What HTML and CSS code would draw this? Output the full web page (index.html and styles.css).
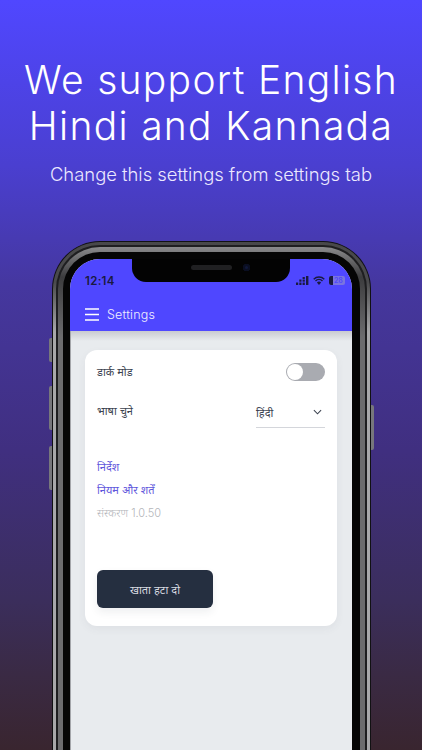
FILE: index.html
```html
<!DOCTYPE html>
<html lang="hi">
<head>
<meta charset="utf-8">
<title>Settings</title>
<link rel="stylesheet" href="styles.css">
</head>
<body>
<main class="poster">
  <header class="hero">
    <h1>We support English<br>Hindi and Kannada</h1>
    <p>Change this settings from settings tab</p>
  </header>
  <div class="phone">
    <span class="side side-mute"></span>
    <span class="side side-up"></span>
    <span class="side side-down"></span>
    <span class="side side-power"></span>
    <div class="ring-outer">
      <div class="ring-inner">
        <div class="bezel">
          <div class="screen">
            <div class="notch"><span class="speaker"></span><span class="camera"></span></div>
            <div class="topbar">
              <div class="status">
                <span class="time">12:14</span>
                <span class="status-icons">
                  <svg class="signal" viewBox="0 0 13 9" width="13" height="9"><g fill="#1a1a40"><rect x="0" y="6.500" width="2.200" height="2.500"/><rect x="3.300" y="3.500" width="2.200" height="2.200"/><rect x="3.300" y="6.500" width="2.200" height="2.500"/><rect x="6.600" y="1" width="2.200" height="2"/><rect x="6.600" y="3.500" width="2.200" height="2.200"/><rect x="6.600" y="6.500" width="2.200" height="2.500"/><rect x="10" y="0" width="2.400" height="9"/></g></svg>
                  <svg class="wifi" viewBox="0 0 12 9" width="12" height="9"><path d="M.7 3.200a7.600 7.600 0 0 1 10.600 0M2.500 5a5 5 0 0 1 7 0" fill="none" stroke="#1a1a40" stroke-width="1.400"/><path d="M3.900 6.500a3 3 0 0 1 4.200 0L6 9z" fill="#1a1a40"/></svg>
                  <span class="battery"><span class="level"></span><span class="percent">28</span></span>
                </span>
              </div>
              <div class="appbar">
                <svg class="menu" viewBox="0 0 14 13" width="14" height="13"><path d="M0 1h14M0 6.500h14M0 12h14" stroke="#fff" stroke-width="1.400"/></svg>
                <span class="title">Settings</span>
              </div>
            </div>
            <div class="content">
              <section class="card">
                <div class="row row-dark">
                  <span class="label">डार्क मोड</span>
                  <span class="toggle"><span class="knob"></span></span>
                </div>
                <div class="row row-lang">
                  <span class="label label-lang">भाषा चुने</span>
                  <span class="select">
                    <span>हिंदी</span>
                    <svg viewBox="0 0 10 6" width="9" height="6"><path d="M1 1l4 4 4-4" fill="none" stroke="#3c4350" stroke-width="1.200"/></svg>
                  </span>
                </div>
                <nav class="links">
                  <a>निर्देश</a>
                  <a>नियम और शर्तें</a>
                  <span class="version">संस्करण 1.0.50</span>
                </nav>
                <button class="delete" type="button">खाता हटा दो</button>
              </section>
            </div>
          </div>
        </div>
      </div>
    </div>
  </div>
</main>
</body>
</html>
```
FILE: styles.css
```css
* { box-sizing: border-box; }
html, body { margin: 0; height: 100%; overflow: hidden; }
body { font-family: "Inter", "Noto Sans", "Noto Sans Devanagari", sans-serif; }
.poster {
  width: 422px;
  height: 750px;
  overflow: hidden;
  display: flex;
  flex-direction: column;
  align-items: center;
  background: linear-gradient(180deg, #5047ff 0%, #4a3fd0 22%, #45379f 38%, #402f80 60%, #3b2e5c 80%, #3a2a44 90%, #39252f 100%);
}
.hero { padding-top: 57px; text-align: center; color: #fff; }
.hero h1 {
  margin: 0;
  font-size: 39px;
  font-weight: 300;
  line-height: 46px;
  letter-spacing: 1.3px;
  white-space: nowrap;
}
.hero p {
  margin: 13px 0 0;
  font-size: 18.400px;
  line-height: 24px;
  font-weight: 300;
  color: #ece9ff;
  white-space: nowrap;
}
.phone {
  position: relative;
  flex: none;
  width: 319px;
  height: 560px;
  margin-top: 55px;
  margin-left: 1px;
}
.ring-outer {
  height: 100%;
  padding: 3px 3px 0;
  border: 1px solid #111113;
  border-bottom: 0;
  border-radius: 48px 48px 0 0;
  background: linear-gradient(180deg, #48484a 0, #4a4a4c 40px, #a8a8aa 90px);
}
.ring-inner {
  height: 100%;
  padding: 5px 5px 0;
  border: 2px solid #1e1e20;
  border-bottom: 0;
  border-radius: 44px 44px 0 0;
  background: linear-gradient(180deg, #8a8a8c 0, #3c3c3e 30px, #6c6c6e 90px);
}
.bezel {
  height: 100%;
  padding: 7px 8px 0 7px;
  border-radius: 37px 37px 0 0;
  background: #050505;
}
.side { position: absolute; left: -3px; width: 3px; background: #77777c; border-radius: 2px 0 0 2px; }
.side-mute { top: 97px; height: 24px; }
.side-up { top: 145px; height: 44px; }
.side-down { top: 205px; height: 44px; }
.side-power { left: auto; right: -3px; top: 164px; height: 45px; border-radius: 0 2px 2px 0; }
.screen {
  position: relative;
  height: 100%;
  border-radius: 30px 30px 0 0;
  overflow: hidden;
  background: #e8ebee;
  color: #3c4350;
}
.notch {
  position: absolute;
  top: 0;
  left: 62px;
  width: 158px;
  height: 23px;
  background: #030303;
  border-radius: 0 0 14px 14px;
  display: flex;
  justify-content: center;
  align-items: center;
  gap: 11px;
  padding: 0 0 6px 18px;
}
.speaker { width: 41px; height: 5px; border-radius: 3px; background: #202022; }
.camera { width: 7px; height: 7px; border-radius: 50%; background: #10183a; box-shadow: inset 0 0 0 2px #0a0e20; }
.topbar { background: #4f47ff; height: 72px; display: flex; flex-direction: column; }
.status { display: flex; justify-content: space-between; align-items: center; padding: 14px 7px 0 15px; height: 29px; }
.time { font-size: 11.500px; font-weight: 600; color: #1a1a40; letter-spacing: .3px; }
.status-icons { display: flex; align-items: center; gap: 4px; }
.battery { position: relative; display: block; width: 16px; height: 9px; border-radius: 2px; background: #7a74e0; overflow: hidden; }
.level { display: block; width: 4px; height: 100%; background: #1a1a40; }
.percent { position: absolute; top: 0; left: 5px; font-size: 7px; line-height: 9px; font-weight: 600; color: #4f47ff; }
.appbar { display: flex; align-items: center; gap: 8px; padding: 9px 15px 0; height: 43px; }
.title { color: #f0efff; font-size: 12.500px; font-weight: 300; letter-spacing: .2px; }
.content { padding: 19px 15px 0; background: linear-gradient(180deg, #c9cbd0 0, #e8ebee 10px); height: 100%; box-shadow: inset 1px 0 0 #a4a6aa; }
.card {
  height: 276px;
  padding: 12px 12px 0;
  border-radius: 12px;
  background: #fff;
  box-shadow: 0 3px 8px rgba(60, 70, 90, .06);
  display: flex;
  flex-direction: column;
}
.row { display: flex; justify-content: space-between; align-items: center; }
.row-dark { height: 19px; }
.row-lang { margin-top: 16px; height: 30px; align-items: flex-start; }
.label { font-size: 11px; line-height: 18px; color: #3c4350; }
.label-lang { margin-top: 5px; }
.toggle { display: block; align-self: flex-end; width: 39px; height: 18px; border-radius: 9px; background: #a9abb1; padding: 1px; }
.knob { display: block; width: 16px; height: 16px; border-radius: 50%; background: #fff; }
.select {
  width: 69px;
  height: 31px;
  display: flex;
  justify-content: space-between;
  align-items: center;
  padding: 0 3px 0 0;
  font-size: 11px;
  color: #3c4350;
  border-bottom: 1px solid #d4d6db;
}
.links { margin-top: 31px; display: flex; flex-direction: column; gap: 5px; font-size: 11px; line-height: 18px; color: #5f57dc; }
.version { color: #b4b6ba; font-weight: 300; }
.delete {
  margin-top: 48px;
  width: 116px;
  height: 38px;
  border: 0;
  border-radius: 6px;
  background: #252f40;
  color: #d8dae0;
  font: inherit;
  font-size: 11px;
  box-shadow: 0 4px 8px rgba(40, 50, 70, .08);
}
```
